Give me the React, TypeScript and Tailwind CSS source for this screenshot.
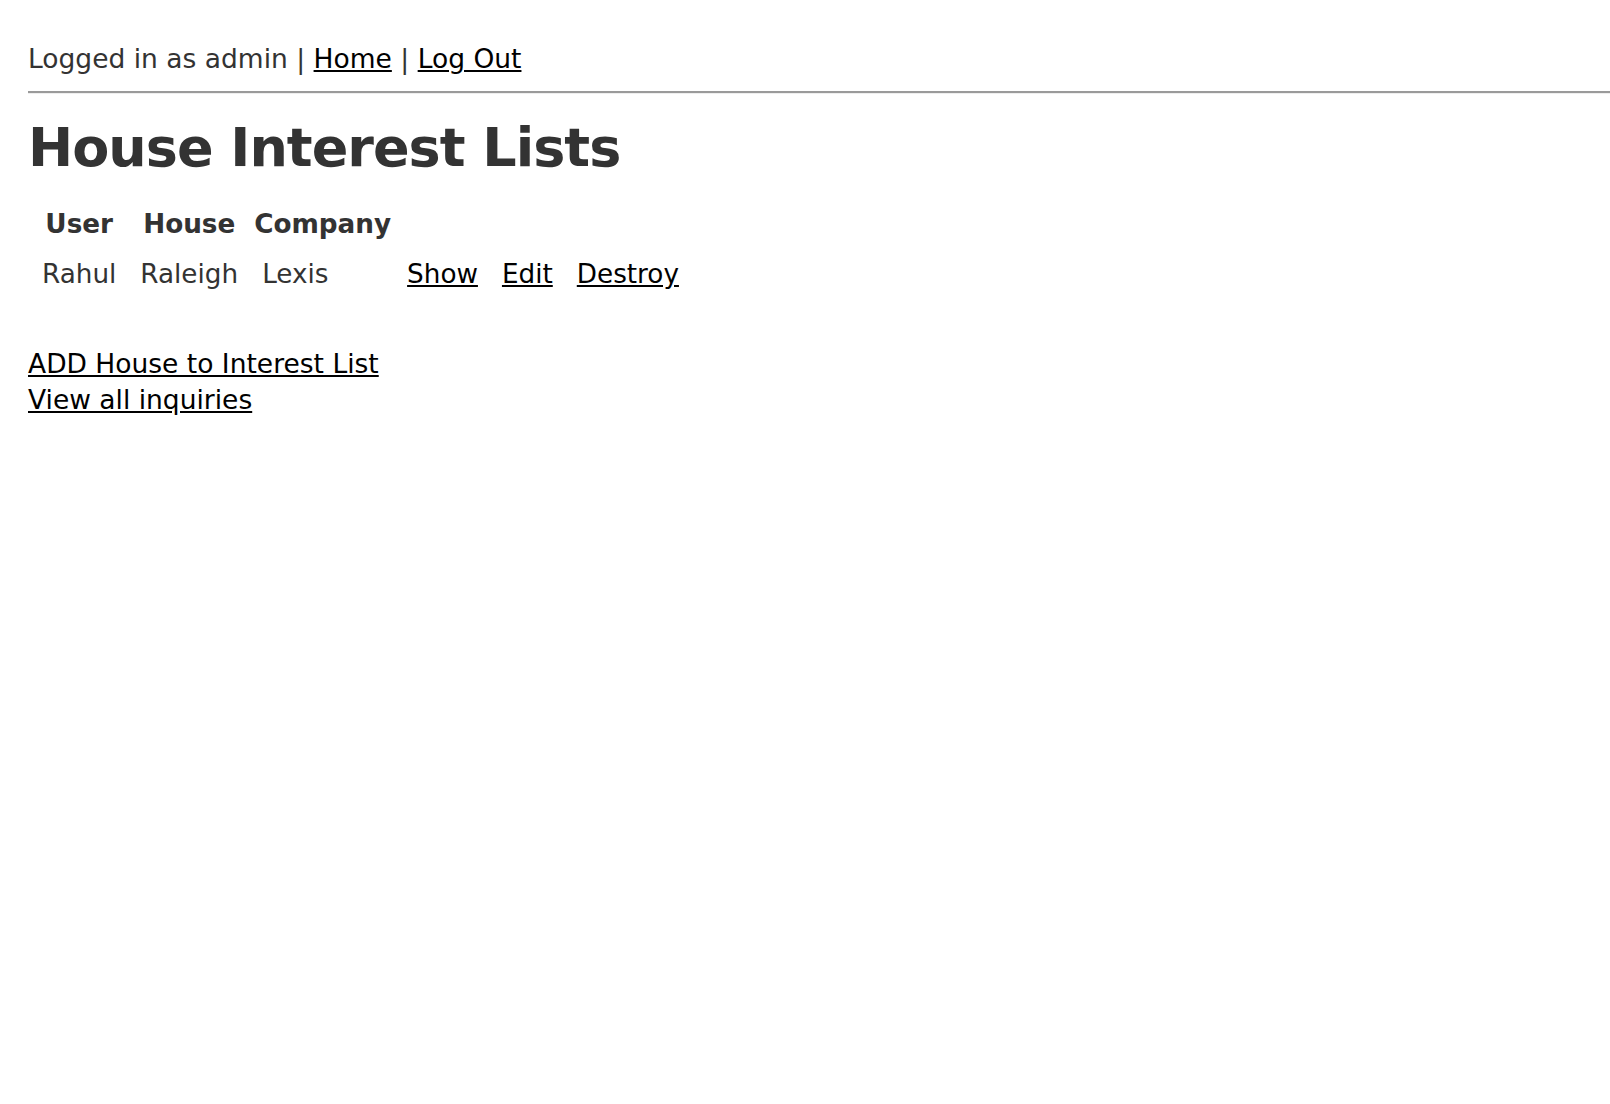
import React from 'react';

interface InterestList {
  id: number;
  user: string;
  house: string;
  company: string;
}

const lists: InterestList[] = [{ id: 1, user: 'Rahul', house: 'Raleigh', company: 'Lexis' }];

const App: React.FC = () => {
  return (
    <div
      className="min-h-screen bg-white pl-[28px] pt-[41px] text-[26.5px] leading-[36px] text-[#333]"
      style={{ fontFamily: '"DejaVu Sans", Verdana, sans-serif' }}
    >
      <p>
        Logged in as admin |{' '}
        <a href="#" className="text-black underline">
          Home
        </a>{' '}
        |{' '}
        <a href="#" className="text-black underline">
          Log Out
        </a>
      </p>
      <hr className="mt-[14px] border-t-2 border-b border-t-[#9a9a9a] border-b-[#eeeeee]" />

      <h1 className="mt-[18px] text-[54px] font-bold leading-[72px] tracking-[-1px]">House Interest Lists</h1>

      <table className="mt-[18px] border-separate border-spacing-[4px] text-[26.25px]">
        <thead>
          <tr>
            <th className="px-[2px] pb-[10px] font-bold">User</th>
            <th className="px-[2px] pb-[10px] font-bold">House</th>
            <th className="px-[2px] pb-[10px] font-bold">Company</th>
            <th colSpan={3}></th>
          </tr>
        </thead>
        <tbody>
          {lists.map((item) => (
            <tr key={item.id}>
              <td className="px-[10px] pb-[14px]">{item.user}</td>
              <td className="px-[10px] pb-[14px]">{item.house}</td>
              <td className="px-[10px] pb-[14px]">{item.company}</td>
              <td className="px-[10px] pb-[14px]">
                <a href="#" className="text-black underline">
                  Show
                </a>
              </td>
              <td className="px-[10px] pb-[14px]">
                <a href="#" className="text-black underline">
                  Edit
                </a>
              </td>
              <td className="px-[10px] pb-[14px]">
                <a href="#" className="text-black underline">
                  Destroy
                </a>
              </td>
            </tr>
          ))}
        </tbody>
      </table>

      <div className="mt-[36px]">
        <a href="#" className="text-black underline">
          ADD House to Interest List
        </a>
        <br />
        <a href="#" className="text-black underline">
          View all inquiries
        </a>
      </div>
    </div>
  );
};

export default App;
